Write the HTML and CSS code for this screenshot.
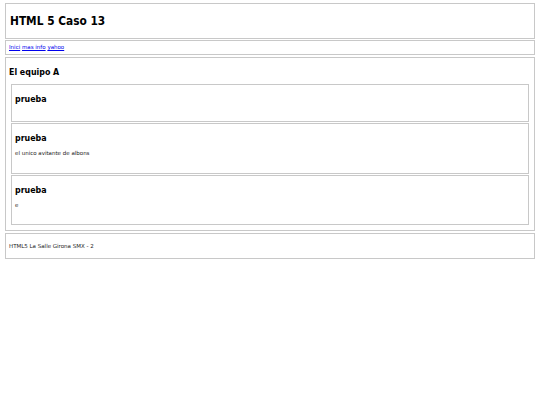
FILE: index.html
```html
<!DOCTYPE html>
<html>
<head>
<meta charset="utf-8">
<title>HTML 5 Caso 13</title>
<link rel="stylesheet" href="styles.css">
</head>
<body>
<div class="page">
  <header class="header">
    <h1 class="title">HTML 5 Caso 13</h1>
  </header>
  <nav class="nav">
    <a href="#">Inici</a> <a href="#">mas info</a> <a href="#">yahoo</a>
  </nav>
  <section class="main">
    <h2 class="section-title">El equipo A</h2>
    <article class="card card-1">
      <h3 class="card-title">prueba</h3>
    </article>
    <article class="card card-2">
      <h3 class="card-title">prueba</h3>
      <p class="card-text">el unico avitante de albons</p>
    </article>
    <article class="card card-3">
      <h3 class="card-title">prueba</h3>
      <p class="card-text">e</p>
    </article>
  </section>
  <footer class="footer">
    <p class="footer-text">HTML5 La Salle Girona SMX - 2</p>
  </footer>
</div>
</body>
</html>
```
FILE: styles.css
```css
html, body {
  margin: 0;
  padding: 0;
  background: #fff;
}
body {
  font-family: "DejaVu Sans", Verdana, sans-serif;
  font-size: 5.5px;
  color: #222;
}
.page {
  display: flex;
  flex-direction: column;
  padding: 3px 5px;
}
.header, .nav, .main, .footer {
  border: 1px solid #c8c8c8;
}
.header {
  height: 34px;
  display: flex;
  align-items: center;
  padding: 0 4px;
}
.title, .section-title, .card-title {
  font-family: "DejaVu Sans Condensed", "DejaVu Sans", Verdana, sans-serif;
  font-weight: bold;
  color: #000;
}
.title {
  margin: 0;
  font-size: 11.8px;
  line-height: 14px;
}
.nav {
  margin-top: 1px;
  height: 13px;
  padding: 0 3px;
  line-height: 13px;
}
.nav a {
  color: #0000ee;
  text-decoration: underline;
}
.main {
  margin-top: 2px;
  display: flex;
  flex-direction: column;
  gap: 1px;
  padding: 9px 5px 5px 3px;
}
.section-title {
  margin: 0 0 6px;
  font-size: 8.8px;
  line-height: 10px;
}
.card {
  margin-left: 2px;
  border: 1px solid #c8c8c8;
  padding: 9px 3px 0;
}
.card-1 { height: 27px; }
.card-2 { height: 40px; }
.card-3 { height: 39px; }
.card-title {
  margin: 0 0 7px;
  font-size: 8.8px;
  line-height: 10px;
}
.card-text {
  margin: 0;
  line-height: 7px;
}
.footer {
  margin-top: 2px;
  height: 24px;
  display: flex;
  align-items: center;
  padding: 0 3px;
}
.footer-text {
  margin: 0;
  line-height: 7px;
}
```
